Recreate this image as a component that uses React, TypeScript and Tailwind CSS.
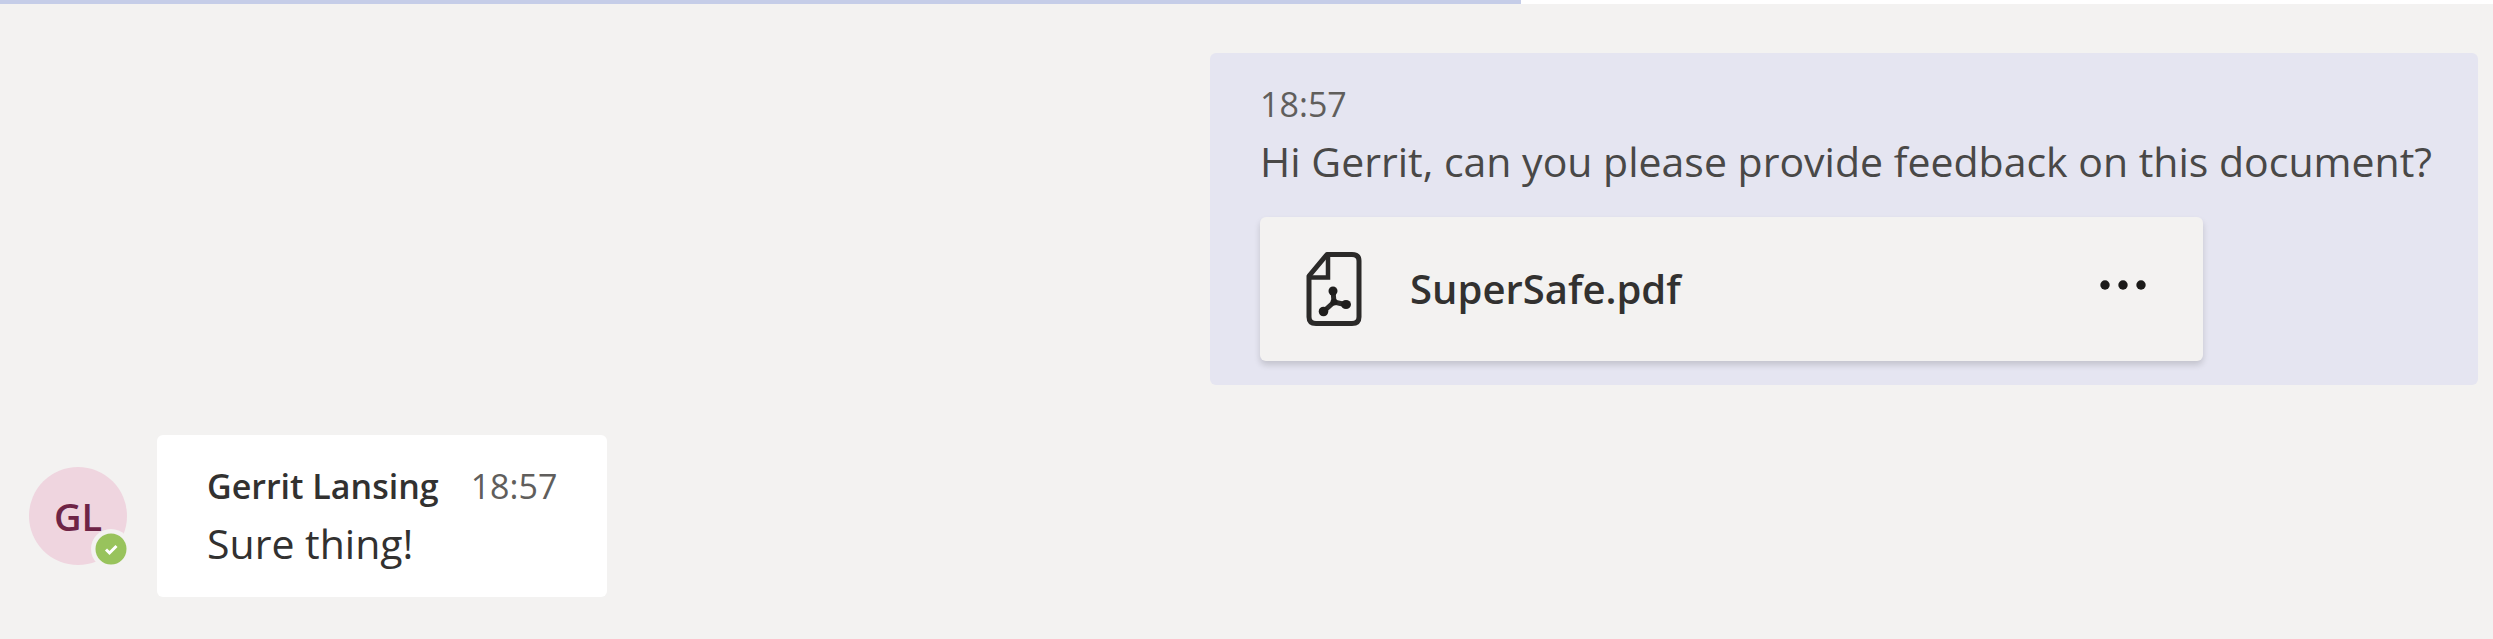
import React from 'react';

const PdfIcon: React.FC = () => (
  <svg className="w-14 h-[76px] shrink-0" viewBox="0 0 56 76" fill="none" stroke="#2b2a29" aria-hidden="true">
    <path
      strokeWidth="5"
      strokeLinejoin="round"
      d="M21 3.500H46Q53 3.500 53 10V66Q53 72.500 46 72.500H10Q3 72.500 3 66V25Z"
    />
    <path strokeWidth="4.500" d="M22 4V26.500H3" />
    <path strokeWidth="5" strokeLinecap="round" strokeLinejoin="round" d="M27 40L28 51L41 54M28 51L17 61" />
    <g fill="#1f1e1d" stroke="none">
      <circle cx="27" cy="40" r="4.500" />
      <circle cx="28" cy="51" r="3.500" />
      <ellipse cx="40" cy="53.500" rx="5" ry="4.500" />
      <circle cx="17.500" cy="60.500" r="4.800" />
    </g>
  </svg>
);

const Avatar: React.FC<{ initials: string }> = ({ initials }) => (
  <div className="relative flex h-[98px] w-[98px] shrink-0 items-center justify-center rounded-full bg-[#efd5df] text-[38px] font-semibold text-[#6e2446]">
    {initials}
    <svg className="absolute -right-1 -bottom-1 h-10 w-10" viewBox="0 0 40 40" role="img" aria-label="Available">
      <circle cx="20" cy="20" r="20" fill="#f3f2f1" />
      <circle cx="20" cy="20" r="15.500" fill="#98c35c" />
      <path d="M15 20.500L18.500 24L25.500 17" fill="none" stroke="#fff" strokeWidth="3" />
    </svg>
  </div>
);

const FileCard: React.FC<{ name: string }> = ({ name }) => (
  <div className="mt-[26px] flex h-36 max-w-[943px] items-center rounded-md bg-[#f3f2f1] pl-[46px] pr-12 shadow-[0_4px_6px_rgba(0,0,0,0.15)]">
    <PdfIcon />
    <span className="ml-12 text-[40px] font-semibold text-[#323130]">{name}</span>
    <button type="button" aria-label="More options" className="ml-auto flex h-16 w-16 items-center justify-center pb-2">
      <svg className="h-3 w-12" viewBox="0 0 48 12" fill="#1b1a19">
        <circle cx="6" cy="6" r="4.700" />
        <circle cx="24" cy="6" r="4.700" />
        <circle cx="42" cy="6" r="4.700" />
      </svg>
    </button>
  </div>
);

const App: React.FC = () => {
  return (
    <main className="min-h-screen bg-[#f3f2f1] font-['Open_Sans','Noto_Sans',sans-serif]">
      <div className="h-1 bg-white">
        <div className="h-full w-[61%] bg-[#c5cde8]" />
      </div>

      <div className="flex flex-col gap-[50px] pt-[49px] pr-[15px] pl-[29px]">
        <article className="self-end rounded-md bg-[#e5e5f1] pt-6 pr-[46px] pb-6 pl-[50px]">
          <time className="block text-[34px] leading-[54px] text-[#605e5c]">18:57</time>
          <p className="text-[41px] leading-[60px] text-[#494847]">
            Hi Gerrit, can you please provide feedback on this document?
          </p>
          <FileCard name="SuperSafe.pdf" />
        </article>

        <div className="flex items-center gap-[30px]">
          <Avatar initials="GL" />
          <article className="rounded-md bg-white pt-6 pr-[50px] pb-6 pl-[50px]">
            <header className="flex gap-8 text-[34px] leading-[54px]">
              <span className="font-semibold text-[#323130]">Gerrit Lansing</span>
              <time className="text-[#605e5c]">18:57</time>
            </header>
            <p className="text-[41px] leading-[60px] text-[#323130]">Sure thing!</p>
          </article>
        </div>
      </div>
    </main>
  );
};

export default App;
